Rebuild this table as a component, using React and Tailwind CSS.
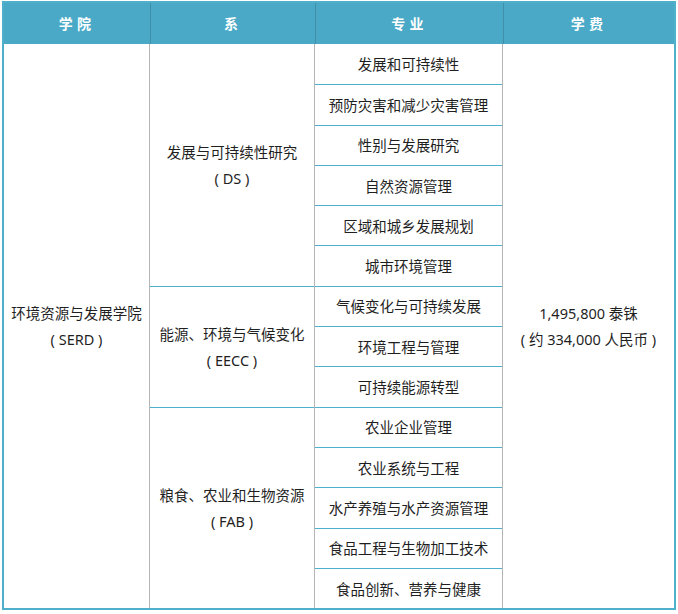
const TEAL = 'border-[#4fb0cb]';

const departments = [
  {
    name: '发展与可持续性研究',
    code: '( DS )',
    majors: ['发展和可持续性', '预防灾害和减少灾害管理', '性别与发展研究', '自然资源管理', '区域和城乡发展规划', '城市环境管理'],
  },
  {
    name: '能源、环境与气候变化',
    code: '( EECC )',
    majors: ['气候变化与可持续发展', '环境工程与管理', '可持续能源转型'],
  },
  {
    name: '粮食、农业和生物资源',
    code: '( FAB )',
    majors: ['农业企业管理', '农业系统与工程', '水产养殖与水产资源管理', '食品工程与生物加工技术', '食品创新、营养与健康'],
  },
];

const ROW = 40.3;

function HeaderCell({ children, first }) {
  return (
    <div
      className={`flex items-center justify-center font-bold text-white text-[14px] tracking-[0.3em] ${
        first ? '' : 'border-l border-[#3f8fa8]'
      }`}
    >
      {children}
    </div>
  );
}

export default function App() {
  return (
    <div
      className="bg-white w-[678px] h-[614px] pt-[1px] pl-[2px] text-[#1f1f1f] text-[14.5px] leading-[26px]"
      style={{ fontFamily: '"Noto Sans", "Noto Sans CJK SC", sans-serif' }}
    >
      <div className={`w-[674px] border-2 ${TEAL}`}>
        <div className="grid grid-cols-[146px_165px_188px_171px] h-[41px] bg-[#49a9c6]">
          <HeaderCell first>学院</HeaderCell>
          <HeaderCell>系</HeaderCell>
          <HeaderCell>专业</HeaderCell>
          <HeaderCell>学费</HeaderCell>
        </div>
        <div className="flex">
          <div className="w-[146px] border-r border-[#b5b5b5] flex flex-col items-center justify-center text-center">
            <div>环境资源与发展学院</div>
            <div>( SERD )</div>
          </div>
          <div className="w-[165px] border-r border-[#b5b5b5] flex flex-col">
            {departments.map((d, i) => (
              <div
                key={d.code}
                className={`flex flex-col items-center justify-center text-center box-border ${
                  i > 0 ? `border-t ${TEAL}` : ''
                }`}
                style={{ height: d.majors.length * ROW }}
              >
                <div>{d.name}</div>
                <div>{d.code}</div>
              </div>
            ))}
          </div>
          <div className="w-[188px] border-r border-[#b5b5b5] flex flex-col">
            {departments
              .flatMap((d) => d.majors)
              .map((m, i) => (
                <div
                  key={m}
                  className={`flex items-center justify-center box-border ${i > 0 ? `border-t ${TEAL}` : ''}`}
                  style={{ height: ROW }}
                >
                  {m}
                </div>
              ))}
          </div>
          <div className="flex-1 flex flex-col items-center justify-center text-center">
            <div>1,495,800 泰铢</div>
            <div>( 约 334,000 人民币 )</div>
          </div>
        </div>
      </div>
    </div>
  );
}
